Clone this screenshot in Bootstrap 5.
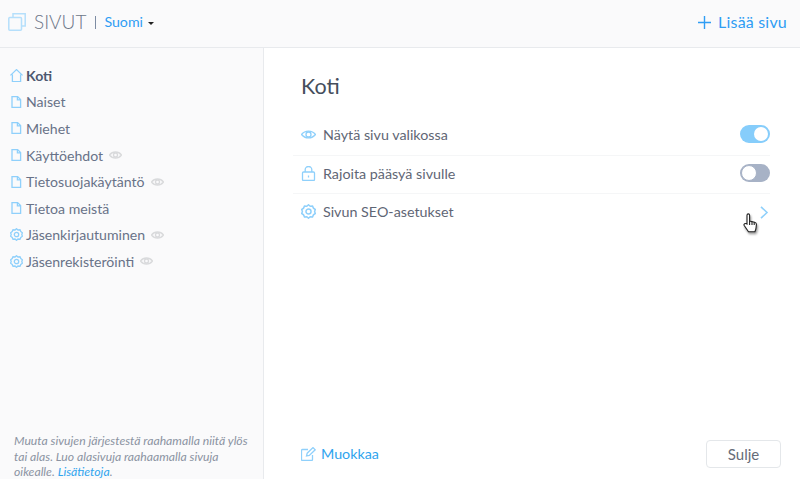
<!DOCTYPE html>
<html lang="fi">
<head>
    <meta charset="UTF-8">
    <meta name="viewport" content="width=device-width, initial-scale=1">
    <title>Sivut</title>
    <link href="https://cdn.jsdelivr.net/npm/bootstrap@5.3.0/dist/css/bootstrap.min.css" rel="stylesheet">
    <style>
        html, body { height: 479px; overflow: hidden; }
        body { font-family: Lato, "Open Sans", sans-serif; color: #5b6478; background: #fff; }
        svg { fill: none; stroke: #8fd0fb; stroke-width: 1.3; flex: none; }
        .top-bar { height: 48px; background: #fafafb; border-bottom: 1px solid #e8eaed; padding: 0 13px 3px 8px; }
        .top-logo { stroke: #b5dffb; stroke-width: 1.5; }
        .top-title { font-size: 19px; font-weight: 300; color: #6d7688; margin-left: 8px; }
        .top-sep { width: 1px; height: 13px; background: #7d8ca3; margin: 0 8px 0 9px; }
        .lang-link, .add-link, .edit-link, .help-link { color: #2f9df4; text-decoration: none; }
        .lang-link { font-size: 14.2px; }
        .lang-caret { border-top: 3px solid #222; border-left: 3px solid transparent; border-right: 3px solid transparent; margin-left: 5px; margin-top: 2px; }
        .add-link { font-size: 16px; letter-spacing: .2px; }
        .add-link svg { stroke: #2f9df4; stroke-width: 1.4; margin-right: 7px; }
        .main-area { height: 431px; }
        .side-panel { width: 264px; background: #fafafb; border-right: 1px solid #e8eaed; padding: 14px 0 0 10px; }
        .page-item { height: 26.6px; font-size: 14.1px; color: #687288; gap: 3px; }
        .page-item.is-current { font-weight: 700; color: #4d5870; }
        .page-item .hide-eye { stroke: #d9dadc; margin-left: 3px; }
        .side-hint { font-size: 12.2px; font-style: italic; line-height: 15.5px; color: #8b93a2; margin: auto 0 0; padding: 0 8px 0 4px; height: 46px; }
        .help-link { color: #2fa4ee; }
        .detail-panel { padding: 25px 19px 0 37px; }
        .detail-title { font-size: 21.5px; font-weight: 400; color: #454e5c; margin: 0 0 16px; line-height: 27px; }
        .option-row { height: 38.5px; padding-bottom: 2px; font-size: 14.3px; color: #5f6675; gap: 7px; margin: 0 11px 0 -8px; padding-left: 8px; }
        .option-row + .option-row { border-top: 1px solid #f5f6f7; }
        .option-arrow { margin: 2px 1px 0 0; stroke-width: 1.6; }
        .toggle-pill { width: 30px; height: 18px; border-radius: 9px; background: #86cdfb; position: relative; }
        .toggle-pill::after { content: ""; position: absolute; top: 2px; right: 2px; width: 14px; height: 14px; border-radius: 50%; background: #fff; }
        .toggle-pill.is-off { background: #a7b2c6; }
        .toggle-pill.is-off::after { right: auto; left: 1px; top: 1px; width: 16px; height: 16px; border: 1px solid #a7b2c6; }
        .cursor-hand { position: absolute; left: 743px; top: 209px; }
        .cursor-hand svg { fill: #fff; stroke: #222; stroke-width: 1.1; filter: drop-shadow(1px 2px 1px rgba(0,0,0,.4)); }
        .edit-link { font-size: 14.3px; gap: 5px; color: #2fa4ee; }
        .close-btn { width: 75px; height: 28px; padding: 0; font-size: 15px; color: #666c78; background: #fff; border: 1px solid #e4e7ea; border-radius: 4px; }
        .detail-foot { padding-bottom: 11px; }
    </style>
</head>
<body>
    <!-- Top bar -->
    <header class="top-bar d-flex align-items-center">
        <svg class="top-logo" width="18" height="18" viewBox="0 0 18 18"><path d="M5 4.500V.8h12.200V13h-3.700"/><rect x=".8" y="4.500" width="12.700" height="12.700" rx="1"/></svg>
        <span class="top-title">SIVUT</span>
        <span class="top-sep"></span>
        <a class="lang-link" href="#">Suomi</a>
        <span class="lang-caret"></span>
        <a class="add-link ms-auto d-flex align-items-center" href="#">
            <svg width="13" height="13" viewBox="0 0 13 13"><path d="M6.500 0v13M0 6.500h13"/></svg>
            Lisää sivu
        </a>
    </header>

    <div class="main-area d-flex">
        <!-- Page list -->
        <aside class="side-panel d-flex flex-column flex-shrink-0">
            <div class="page-item is-current d-flex align-items-center">
                <svg width="13" height="13" viewBox="0 0 13 13"><path d="M.4 6.400 6.500.6l6.100 5.800M2.400 5.400v7.200h8.200V5.400"/></svg>Koti
            </div>
            <div class="page-item d-flex align-items-center">
                <svg width="13" height="12" viewBox="0 0 13 12"><path d="M2 .6h5.600l3 3v7.800H2zM7.400.6v3.200h3.200"/></svg>Naiset
            </div>
            <div class="page-item d-flex align-items-center">
                <svg width="13" height="12" viewBox="0 0 13 12"><path d="M2 .6h5.600l3 3v7.800H2zM7.400.6v3.200h3.200"/></svg>Miehet
            </div>
            <div class="page-item d-flex align-items-center">
                <svg width="13" height="12" viewBox="0 0 13 12"><path d="M2 .6h5.600l3 3v7.800H2zM7.400.6v3.200h3.200"/></svg>Käyttöehdot
                <svg class="hide-eye" width="13" height="10" viewBox="0 0 13 10"><path d="M.5 5C3.500 1 9.500 1 12.500 5 9.500 9 3.500 9 .5 5z"/><circle cx="6.500" cy="5" r="2"/></svg>
            </div>
            <div class="page-item d-flex align-items-center">
                <svg width="13" height="12" viewBox="0 0 13 12"><path d="M2 .6h5.600l3 3v7.800H2zM7.400.6v3.200h3.200"/></svg>Tietosuojakäytäntö
                <svg class="hide-eye" width="13" height="10" viewBox="0 0 13 10"><path d="M.5 5C3.500 1 9.500 1 12.500 5 9.500 9 3.500 9 .5 5z"/><circle cx="6.500" cy="5" r="2"/></svg>
            </div>
            <div class="page-item d-flex align-items-center">
                <svg width="13" height="12" viewBox="0 0 13 12"><path d="M2 .6h5.600l3 3v7.800H2zM7.400.6v3.200h3.200"/></svg>Tietoa meistä
            </div>
            <div class="page-item d-flex align-items-center">
                <svg width="13" height="13" viewBox="0 0 13 13"><path d="M6.500.7 8 2l2-.2.8 1.800 1.600 1.200-.6 1.700.6 1.700-1.600 1.200-.8 1.800-2-.2-1.500 1.300L5 11l-2 .2-.8-1.800L.6 8.200l.6-1.700-.6-1.700 1.600-1.200.8-1.800 2 .2z"/><circle cx="6.500" cy="6.500" r="2.200"/></svg>Jäsenkirjautuminen
                <svg class="hide-eye" width="13" height="10" viewBox="0 0 13 10"><path d="M.5 5C3.500 1 9.500 1 12.500 5 9.500 9 3.500 9 .5 5z"/><circle cx="6.500" cy="5" r="2"/></svg>
            </div>
            <div class="page-item d-flex align-items-center">
                <svg width="13" height="13" viewBox="0 0 13 13"><path d="M6.500.7 8 2l2-.2.8 1.800 1.600 1.200-.6 1.700.6 1.700-1.600 1.200-.8 1.800-2-.2-1.500 1.300L5 11l-2 .2-.8-1.800L.6 8.200l.6-1.700-.6-1.700 1.600-1.200.8-1.800 2 .2z"/><circle cx="6.500" cy="6.500" r="2.200"/></svg>Jäsenrekisteröinti
                <svg class="hide-eye" width="13" height="10" viewBox="0 0 13 10"><path d="M.5 5C3.500 1 9.500 1 12.500 5 9.500 9 3.500 9 .5 5z"/><circle cx="6.500" cy="5" r="2"/></svg>
            </div>
            <p class="side-hint">Muuta sivujen järjestestä raahamalla niitä ylös tai alas. Luo alasivuja raahaamalla sivuja oikealle. <a class="help-link" href="#">Lisätietoja</a>.</p>
        </aside>

        <!-- Page details -->
        <main class="detail-panel d-flex flex-column flex-grow-1">
            <h1 class="detail-title">Koti</h1>
            <div class="option-row d-flex align-items-center">
                <svg width="15" height="11" viewBox="0 0 15 11"><path d="M.5 5.500C4 1 11 1 14.500 5.500 11 10 4 10 .5 5.500z"/><circle cx="7.500" cy="5.500" r="2.500"/></svg>
                Näytä sivu valikossa
                <span class="toggle-pill ms-auto"></span>
            </div>
            <div class="option-row d-flex align-items-center">
                <svg width="15" height="15" viewBox="0 0 15 15"><rect x="1.500" y="6" width="12" height="8.500" rx="1"/><path d="M4.200 6V3.500a3.300 3 0 0 1 6.600 0V6M7.500 9.500v2"/></svg>
                Rajoita pääsyä sivulle
                <span class="toggle-pill is-off ms-auto"></span>
            </div>
            <div class="option-row d-flex align-items-center">
                <svg width="15" height="15" viewBox="0 0 13 13"><path d="M6.500.7 8 2l2-.2.800 1.800 1.600 1.200-.6 1.700.6 1.700-1.600 1.200-.8 1.800-2-.2-1.500 1.300L5 11l-2 .2-.8-1.800L.6 8.200l.6-1.700-.6-1.700 1.600-1.200.8-1.800 2 .2z"/><circle cx="6.500" cy="6.500" r="2.200"/></svg>
                Sivun SEO-asetukset
                <svg class="option-arrow ms-auto" width="9" height="13" viewBox="0 0 9 13"><path d="m1 .8 6 5.700-6 5.700"/></svg>
            </div>
            <div class="detail-foot d-flex align-items-center justify-content-between mt-auto">
                <a class="edit-link d-flex align-items-center" href="#">
                    <svg width="15" height="14" viewBox="0 0 15 14"><path d="M7 2.500H1.500a1 1 0 0 0-1 1v9a1 1 0 0 0 1 1h9a1 1 0 0 0 1-1V8M5.500 9l.7-2.800L12 .6l2.200 2.200-5.900 5.600z"/></svg>
                    Muokkaa
                </a>
                <button type="button" class="btn close-btn">Sulje</button>
            </div>
        </main>
    </div>

    <!-- Mouse pointer over the screen -->
    <div class="cursor-hand">
        <svg width="15" height="20" viewBox="0 0 15 20"><path d="M4 11V2.200a1.300 1.300 0 0 1 2.600 0V8l5 1.200c1.200.3 1.900 1.200 1.800 2.400l-.5 4.400-1 2.800H5.500L1.200 12.500c-.8-1.300.9-2.700 2.800-1.500z"/><path d="M6.600 8v4M9 8.600V12M11.200 9.100V12"/></svg>
    </div>

    <script src="https://cdn.jsdelivr.net/npm/bootstrap@5.3.0/dist/js/bootstrap.bundle.min.js"></script>
</body>
</html>
